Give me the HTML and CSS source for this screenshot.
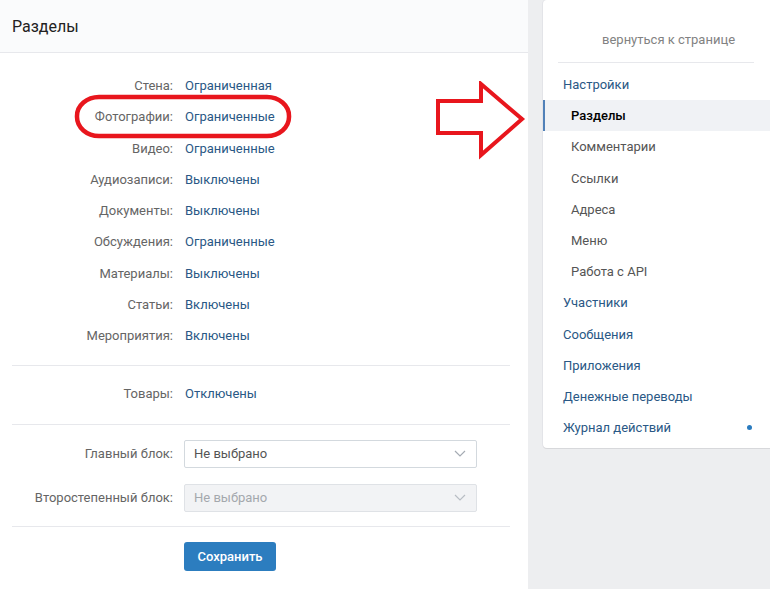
FILE: index.html
```html
<!DOCTYPE html>
<html lang="ru">
<head>
<meta charset="utf-8">
<title>Разделы</title>
<link rel="stylesheet" href="styles.css">
</head>
<body>
<div class="page">
  <main class="main">
    <header class="main-head">Разделы</header>
    <section class="group group-first">
      <div class="row"><span class="label">Стена:</span><a class="value">Ограниченная</a></div>
      <div class="row"><span class="label">Фотографии:</span><a class="value">Ограниченные</a></div>
      <div class="row"><span class="label">Видео:</span><a class="value">Ограниченные</a></div>
      <div class="row"><span class="label">Аудиозаписи:</span><a class="value">Выключены</a></div>
      <div class="row"><span class="label">Документы:</span><a class="value">Выключены</a></div>
      <div class="row"><span class="label">Обсуждения:</span><a class="value">Ограниченные</a></div>
      <div class="row"><span class="label">Материалы:</span><a class="value">Выключены</a></div>
      <div class="row"><span class="label">Статьи:</span><a class="value">Включены</a></div>
      <div class="row"><span class="label">Мероприятия:</span><a class="value">Включены</a></div>
    </section>
    <section class="group group-goods">
      <div class="row"><span class="label">Товары:</span><a class="value">Отключены</a></div>
    </section>
    <section class="group group-blocks">
      <div class="row-sel"><span class="label">Главный блок:</span>
        <div class="select"><span>Не выбрано</span><svg class="chev" width="12" height="7" viewBox="0 0 12 7"><path d="M1 1l5 5 5-5" fill="none" stroke="#a5abb3" stroke-width="1.2"/></svg></div>
      </div>
      <div class="row-sel"><span class="label">Второстепенный блок:</span>
        <div class="select disabled"><span>Не выбрано</span><svg class="chev" width="12" height="7" viewBox="0 0 12 7"><path d="M1 1l5 5 5-5" fill="none" stroke="#b8bdc4" stroke-width="1.2"/></svg></div>
      </div>
    </section>
    <div class="actions"><button class="btn">Сохранить</button></div>
  </main>
  <aside class="side">
    <nav class="menu">
      <div class="back">вернуться к странице</div>
      <div class="menu-sep"></div>
      <a class="mi main-item">Настройки</a>
      <a class="mi sub active">Разделы</a>
      <a class="mi sub">Комментарии</a>
      <a class="mi sub">Ссылки</a>
      <a class="mi sub">Адреса</a>
      <a class="mi sub">Меню</a>
      <a class="mi sub">Работа с API</a>
      <a class="mi main-item">Участники</a>
      <a class="mi main-item">Сообщения</a>
      <a class="mi main-item">Приложения</a>
      <a class="mi main-item">Денежные переводы</a>
      <a class="mi main-item">Журнал действий<span class="dot"></span></a>
    </nav>
  </aside>
  <svg class="mark-oval" width="220" height="46" viewBox="0 0 220 46"><rect x="3" y="3" width="212" height="39" rx="22" ry="19" fill="none" stroke="#e8161d" stroke-width="4.5"/></svg>
  <svg class="mark-arrow" width="92" height="80" viewBox="0 0 92 80"><polygon points="3,20 46,20 46,3 87,38 46,74 46,52 3,52" fill="none" stroke="#e8161d" stroke-width="4" stroke-linejoin="miter"/></svg>
</div>
</body>
</html>
```
FILE: styles.css
```css
html, body {
  margin: 0;
  padding: 0;
}
body {
  background: #edeef0;
  font-family: Roboto, "Open Sans", "Liberation Sans", sans-serif;
  font-size: 13px;
  color: #000;
}
.page {
  position: relative;
  display: flex;
  width: 770px;
  height: 589px;
  overflow: hidden;
}
.main {
  width: 528px;
  flex: none;
  background: #fff;
  height: 589px;
}
.main-head {
  height: 52px;
  border-bottom: 1px solid #e7e8ec;
  background: #fafbfc;
  padding-left: 12px;
  display: flex;
  align-items: center;
  font-size: 16px;
  color: #222;
}
.group {
  margin: 0 18px 0 12px;
  border-bottom: 1px solid #e7e8ec;
}
.group-first {
  padding: 17px 0 14px;
}
.group-goods {
  padding: 12px 0 14px;
}
.group-blocks {
  padding: 15px 0 14px;
  display: flex;
  flex-direction: column;
  gap: 16px;
}
.row {
  display: grid;
  grid-template-columns: 161px 1fr;
  column-gap: 12px;
  height: 31.25px;
  align-items: center;
}
.label {
  text-align: right;
  color: #656565;
}
.value {
  color: #2a5885;
}
.row-sel {
  display: grid;
  grid-template-columns: 161px 293px;
  column-gap: 11px;
  align-items: center;
}
.select {
  height: 26px;
  border: 1px solid #d3d9de;
  border-radius: 2px;
  display: flex;
  align-items: center;
  justify-content: space-between;
  padding: 0 10px 0 9px;
  color: #555;
}
.select.disabled {
  background: #f2f3f5;
  border-color: #dfe2e6;
  color: #a4a8ad;
}
.chev {
  display: block;
}
.actions {
  padding: 15px 0 0 184px;
}
.btn {
  font-family: inherit;
  font-size: 13px;
  font-weight: 500;
  color: #fff;
  background: #2c7dbf;
  border: 0;
  border-radius: 3px;
  width: 92px;
  height: 29px;
  padding: 0;
}
.side {
  margin-left: 15px;
  width: 227px;
  flex: none;
}
.menu {
  background: #fff;
  border-radius: 4px 0 0 4px;
  box-shadow: 0 1px 0 0 #d7d8db, 0 0 0 1px #e3e4e8;
  height: 448px;
  box-sizing: border-box;
}
.back {
  height: 62px;
  box-sizing: border-box;
  padding: 32px 0 0 59px;
  color: #828282;
  line-height: 16px;
}
.menu-sep {
  height: 1px;
  background: #e7e8ec;
  margin: 0 16px 0 15px;
}
.mi {
  display: flex;
  align-items: center;
  height: 31.2px;
  color: #2a5885;
}
.menu-sep + .mi {
  margin-top: 6px;
}
.main-item {
  padding-left: 20px;
}
.sub {
  padding-left: 28px;
  color: #555;
}
.sub.active {
  background: #f0f2f5;
  color: #000;
  font-weight: 500;
  box-shadow: inset 2px 0 0 #5181b8;
}
.dot {
  width: 5px;
  height: 5px;
  border-radius: 50%;
  background: #2a7bbf;
  margin-left: auto;
  margin-right: 18px;
}
.mark-oval {
  position: absolute;
  left: 74px;
  top: 94px;
}
.mark-arrow {
  position: absolute;
  left: 435px;
  top: 81px;
}
```
